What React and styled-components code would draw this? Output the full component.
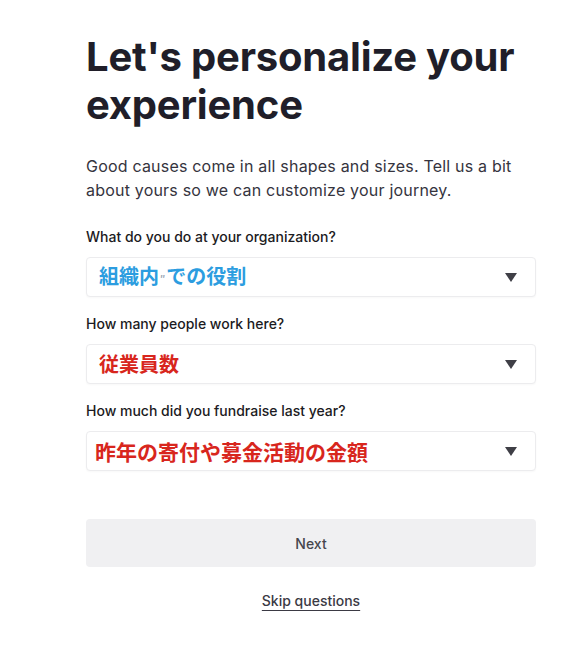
import React from 'react'
import styled, { createGlobalStyle } from 'styled-components'

const GlobalStyle = createGlobalStyle`
  * { box-sizing: border-box; }
  body {
    margin: 0;
    background: #ffffff;
    font-family: Inter, "Noto Sans", "Noto Sans CJK JP", sans-serif;
    -webkit-font-smoothing: antialiased;
  }
`;

const Page = styled.main`
  width: 569px;
  min-height: 650px;
  padding: 33px 0 0 86px;
`;

const Form = styled.div`
  width: 450px;
  display: flex;
  flex-direction: column;
`;

const Title = styled.h1`
  margin: 0;
  font-size: 40px;
  line-height: 48px;
  font-weight: 700;
  letter-spacing: -0.2px;
  color: #201e29;
`;

const Intro = styled.p`
  margin: 25px 0 0;
  font-size: 16px;
  line-height: 24px;
  letter-spacing: 0.2px;
  color: #35343e;
`;

const Field = styled.div`
  display: flex;
  flex-direction: column;
  margin-top: ${p => p.first ? '25px' : '17px'};
`;

const Label = styled.label`
  font-size: 14px;
  line-height: 20px;
  font-weight: 500;
  color: #1c1b22;
`;

const Select = styled.div`
  margin-top: 10px;
  height: 40px;
  display: flex;
  align-items: center;
  justify-content: space-between;
  padding: 0 18px 0 ${p => p.pad}px;
  border: 1px solid #ececee;
  border-radius: 4px;
  background: #fff;
  box-shadow: 0 1px 2px rgba(0, 0, 0, 0.03);
`;

const Value = styled.span`
  font-family: "Noto Sans CJK JP", sans-serif;
  font-size: ${p => p.size || 20}px;
  font-weight: 700;
  line-height: 24px;
  color: ${p => p.tone};
  white-space: nowrap;
`;

const Mark = styled.span`
  font-size: 9px;
  color: #9aa6b4;
  vertical-align: 2px;
  margin: 0 1px;
`;

const Caret = styled.span`
  width: 0;
  height: 0;
  border-left: 6px solid transparent;
  border-right: 6px solid transparent;
  border-top: 9px solid #3f3f46;
`;

const NextButton = styled.button`
  margin-top: 48px;
  height: 48px;
  border: none;
  border-radius: 4px;
  background: #f0f0f2;
  font-family: Inter, sans-serif;
  font-size: 14px;
  font-weight: 500;
  color: #46464d;
`;

const Skip = styled.a`
  align-self: center;
  margin-top: 24px;
  font-size: 14px;
  line-height: 20px;
  font-weight: 500;
  color: #3b3a44;
  text-decoration: underline;
  text-underline-offset: 4px;
`;

const BLUE = '#2c9de0';
const RED = '#d8261d';

export default function App() {
  return (
    <Page>
      <GlobalStyle />
      <Form>
        <Title>Let's personalize your experience</Title>
        <Intro>
          Good causes come in all shapes and sizes. Tell us a bit about yours so we can customize your journey.
        </Intro>

        <Field first>
          <Label>What do you do at your organization?</Label>
          <Select pad={12}>
            <Value tone={BLUE}>組織内<Mark>″</Mark>での役割</Value>
            <Caret />
          </Select>
        </Field>

        <Field>
          <Label>How many people work here?</Label>
          <Select pad={12}>
            <Value tone={RED}>従業員数</Value>
            <Caret />
          </Select>
        </Field>

        <Field>
          <Label>How much did you fundraise last year?</Label>
          <Select pad={8}>
            <Value tone={RED} size={21}>昨年の寄付や募金活動の金額</Value>
            <Caret />
          </Select>
        </Field>

        <NextButton>Next</NextButton>
        <Skip>Skip questions</Skip>
      </Form>
    </Page>
  );
}
